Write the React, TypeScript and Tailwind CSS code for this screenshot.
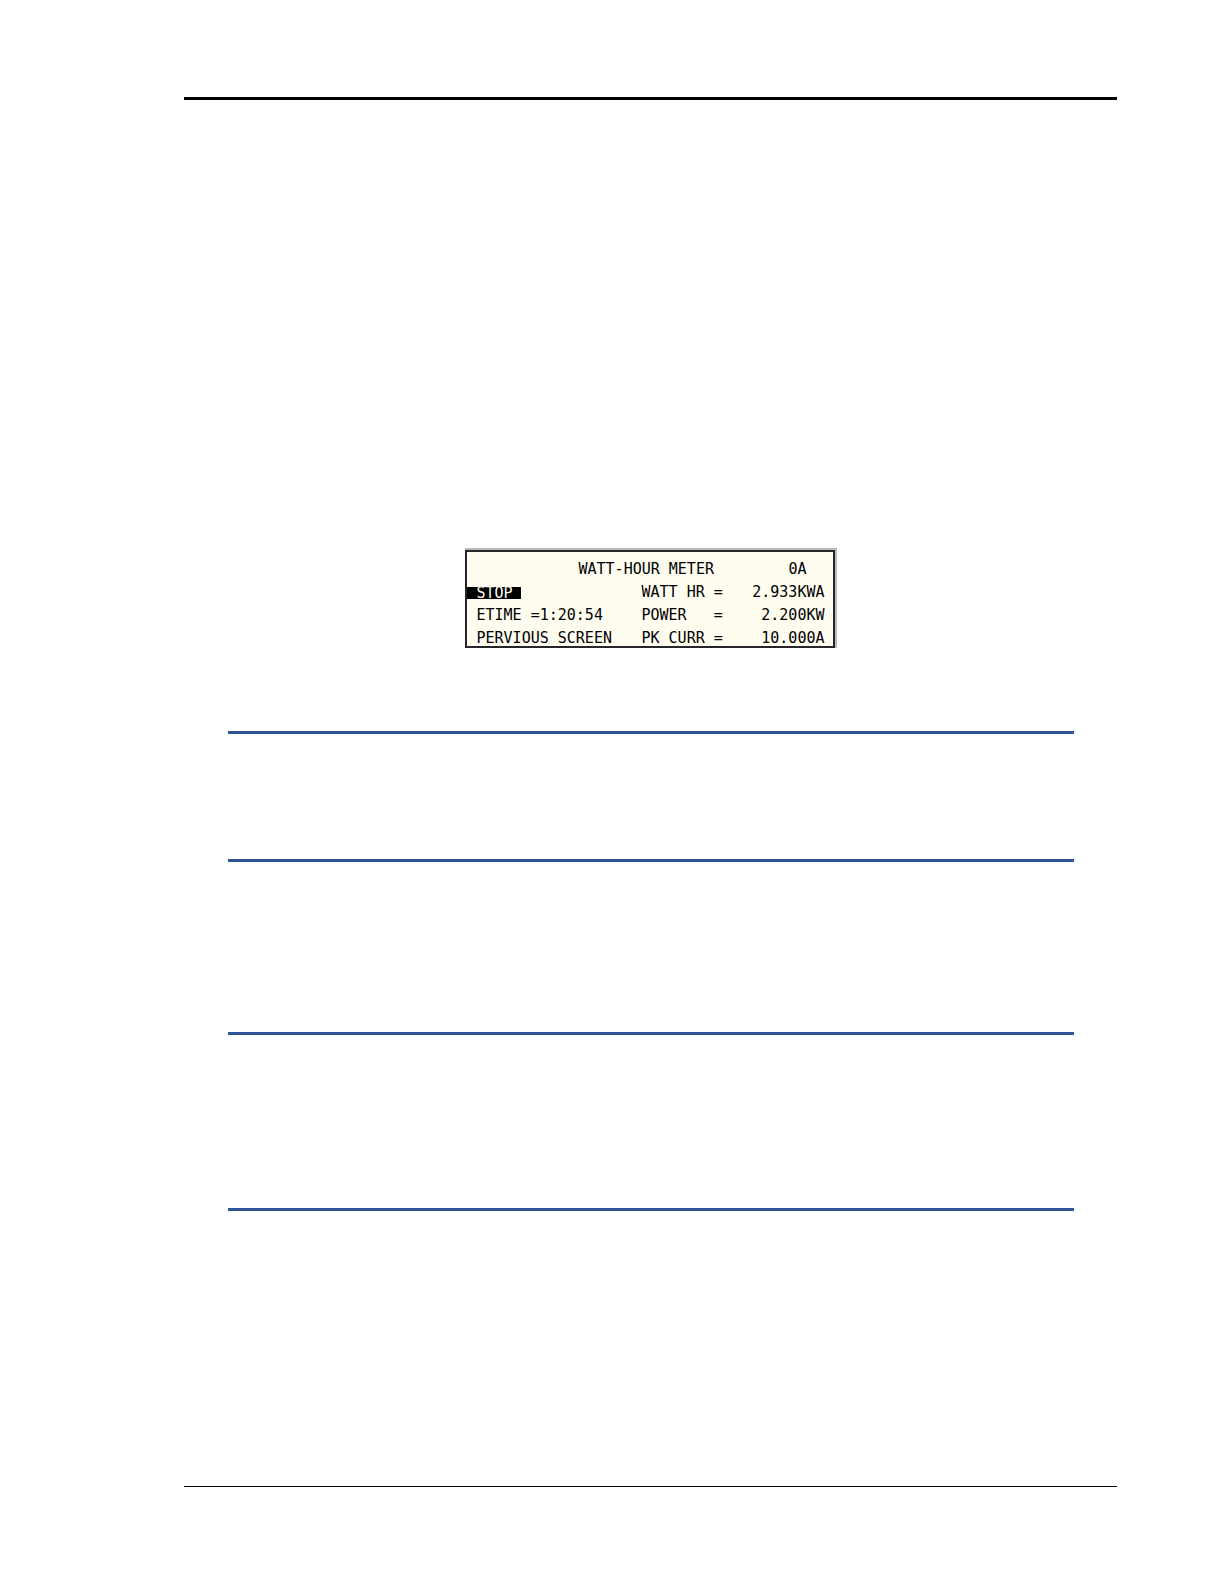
import type { ReactNode } from 'react';

const readings = [
  { label: 'WATT HR =', value: '2.933KWA' },
  { label: 'POWER   =', value: '2.200KW' },
  { label: 'PK CURR =', value: '10.000A' },
];

const softKeys: ReactNode[] = [
  <button className="h-3 w-[54px] bg-black pl-[10px] text-left leading-3 text-[#fffdf0]">STOP</button>,
  <span className="pl-[10px]">ETIME =1:20:54</span>,
  <button className="pl-[10px]">PERVIOUS SCREEN</button>,
];

function Rule({ className }: { className: string }) {
  return <hr className={`mr-[43px] ml-11 border-t-[3px] border-[#2f5597] ${className}`} />;
}

function MeterScreen() {
  return (
    <section
      aria-label="Watt-hour meter"
      className="mx-auto w-[372px] border-t-2 border-r-2 border-[#b9b9b9]"
    >
      <div className="h-[98px] overflow-hidden border-2 border-[#26262a] bg-[#fffcf0] pt-[6px] font-['DejaVu_Sans_Mono','Liberation_Mono',monospace] text-[15px] leading-[23px] whitespace-pre text-black">
        <div className="flex justify-between pr-[26px] pl-[112px]">
          <h1>WATT-HOUR METER</h1>
          <span>0A</span>
        </div>
        {readings.map((reading, idx) => (
          <div key={reading.label} className="flex h-[23px] items-center pr-2">
            <div className="flex w-[175px] items-center">{softKeys[idx]}</div>
            <span>{reading.label}</span>
            <span className="ml-auto">{reading.value}</span>
          </div>
        ))}
      </div>
    </section>
  );
}

export default function App() {
  return (
    <main className="min-h-screen bg-white pt-[97px] pr-[107px] pb-24 pl-[184px]">
      <hr className="border-t-[3px] border-black" />

      <div className="pt-[448px]">
        <MeterScreen />
      </div>

      {/* Section dividers */}
      <Rule className="mt-[83px]" />
      <Rule className="mt-[125px]" />
      <Rule className="mt-[170px]" />
      <Rule className="mt-[173px]" />

      <hr className="mt-[275px] border-t border-black" />
    </main>
  );
}
